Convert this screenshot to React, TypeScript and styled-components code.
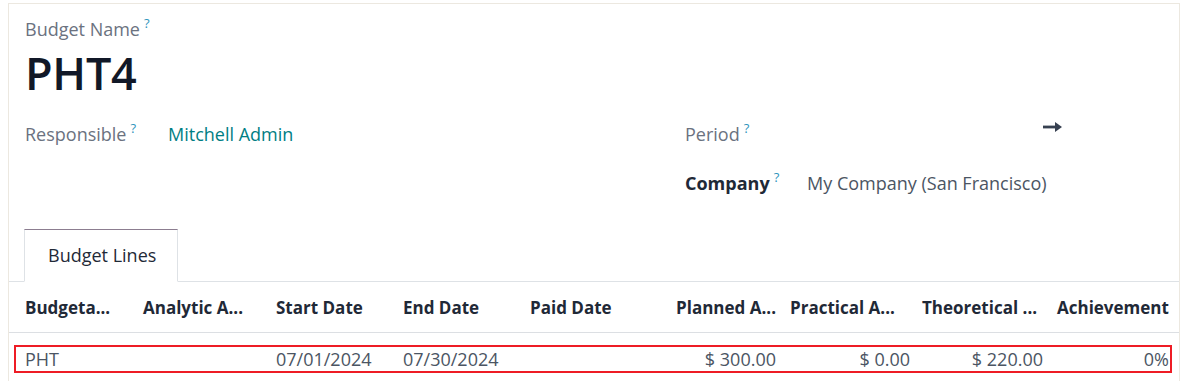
import React from "react";
import styled, { createGlobalStyle } from "styled-components";

const GlobalStyle = createGlobalStyle`
  html, body { margin: 0; padding: 0; background: #ffffff; }
  body { font-family: "Open Sans", "Noto Sans", sans-serif; color: #212529; }
`;

const Page = styled.div`
  padding: 3px 8px 0 8px;
  width: 1172px;
`;

const Card = styled.div`
  border: 1px solid #ece8e0;
  border-bottom: none;
  background: #ffffff;
  height: 378px;
  box-sizing: border-box;
`;

const TitleBlock = styled.div`
  padding: 13px 16px 0 16px;
`;

const LabelLine = styled.div`
  height: 24px;
  display: flex;
  align-items: center;
`;

const Label = styled.span<{ $bold?: boolean; $dark?: boolean }>`
  font-size: 18px;
  line-height: 24px;
  color: ${(p) => (p.$dark ? "#1f2937" : "#6b7280")};
  font-weight: ${(p) => (p.$bold ? 700 : 400)};
  white-space: nowrap;
`;

const Help = styled.sup`
  font-size: 13px;
  line-height: 13px;
  color: #2f95bd;
  margin-left: 4px;
  position: relative;
  top: -1px;
  font-weight: 400;
`;

const Title = styled.h1`
  margin: 1px 0 0 0;
  font-size: 45px;
  font-weight: 600;
  color: #111827;
  line-height: 62px;
  letter-spacing: -0.3px;
`;

const Groups = styled.div`
  display: grid;
  grid-template-columns: 660px 1fr;
  padding: 17px 16px 0 16px;
`;

const Group = styled.div`
  display: flex;
  flex-direction: column;
  gap: 23px;
`;

const FieldRow = styled.div<{ $labelWidth: number }>`
  display: grid;
  grid-template-columns: ${(p) => p.$labelWidth}px 1fr;
  align-items: center;
  height: 26px;
`;

const Value = styled.span<{ $link?: boolean }>`
  font-size: 18px;
  line-height: 24px;
  color: ${(p) => (p.$link ? "#017e84" : "#4b5563")};
  white-space: nowrap;
`;

const PeriodValue = styled.div`
  display: flex;
  justify-content: flex-end;
  align-self: start;
  padding-top: 1px;
  padding-right: 101px;
`;

const Notebook = styled.div`
  margin-top: 33px;
`;

const TabBar = styled.div`
  display: flex;
  padding-left: 15px;
  border-bottom: 1px solid #dee2e6;
  height: 52px;
  align-items: flex-end;
`;

const Tab = styled.div`
  height: 53px;
  box-sizing: border-box;
  padding: 0 21px 2px 23px;
  border: 1px solid #dee2e6;
  border-top-color: #8c7d90;
  border-bottom-color: #ffffff;
  margin-bottom: -1px;
  background: #ffffff;
  display: flex;
  align-items: center;
  font-size: 18px;
  color: #1f2937;
`;

const Table = styled.div`
  position: relative;
`;

const COLS = "118px 133px 127px 127px 128px 134px 134px 133px 126px";

const HeaderRow = styled.div`
  display: grid;
  grid-template-columns: ${COLS};
  padding-left: 8px;
  height: 50px;
  align-items: center;
  border-bottom: 1px solid #dcdfe3;
`;

const HeadCell = styled.div<{ $right?: boolean; $pl?: number }>`
  padding: 0 8px 0 ${(p) => (p.$pl ?? 8)}px;
  font-size: 17px;
  font-weight: 700;
  color: #1f2937;
  white-space: nowrap;
  overflow: hidden;
  text-align: ${(p) => (p.$right ? "right" : "left")};
`;

const DataRow = styled.div`
  position: relative;
  display: grid;
  grid-template-columns: ${COLS};
  padding-left: 8px;
  margin-top: 12px;
  height: 28px;
  align-items: center;
`;

const Cell = styled.div<{ $right?: boolean }>`
  padding: 0 8px;
  font-size: 18px;
  color: #4b5563;
  white-space: nowrap;
  text-align: ${(p) => (p.$right ? "right" : "left")};
`;

const Highlight = styled.div`
  position: absolute;
  left: 5px;
  right: 7px;
  top: 0;
  bottom: 0;
  border: 2px solid #ee1c25;
  pointer-events: none;
`;

const Arrow = () => (
  <svg width="19" height="10" viewBox="0 0 19 10">
    <rect x="0" y="3.6" width="13" height="2.8" fill="#374151" />
    <path d="M12 0 L19 5 L12 10 Z" fill="#374151" />
  </svg>
);

const headers: { t: string; right?: boolean; pl?: number }[] = [
  { t: "Budgeta..." },
  { t: "Analytic A..." },
  { t: "Start Date" },
  { t: "End Date" },
  { t: "Paid Date" },
  { t: "Planned A...", right: true },
  { t: "Practical A...", pl: 6 },
  { t: "Theoretical ...", pl: 4 },
  { t: "Achievement", pl: 6 },
];

const row: { t: string; right?: boolean }[] = [
  { t: "PHT" },
  { t: "" },
  { t: "07/01/2024" },
  { t: "07/30/2024" },
  { t: "" },
  { t: "$ 300.00", right: true },
  { t: "$ 0.00", right: true },
  { t: "$ 220.00", right: true },
  { t: "0%", right: true },
];

export default function App() {
  return (
    <>
      <GlobalStyle />
      <Page>
        <Card>
          <TitleBlock>
            <LabelLine>
              <Label>
                Budget Name<Help>?</Help>
              </Label>
            </LabelLine>
            <Title>PHT4</Title>
          </TitleBlock>
          <Groups>
            <Group>
              <FieldRow $labelWidth={143}>
                <Label>
                  Responsible<Help>?</Help>
                </Label>
                <Value $link>Mitchell Admin</Value>
              </FieldRow>
            </Group>
            <Group>
              <FieldRow $labelWidth={122}>
                <Label>
                  Period<Help>?</Help>
                </Label>
                <PeriodValue>
                  <Arrow />
                </PeriodValue>
              </FieldRow>
              <FieldRow $labelWidth={122}>
                <Label $bold $dark>
                  Company<Help>?</Help>
                </Label>
                <Value>My Company (San Francisco)</Value>
              </FieldRow>
            </Group>
          </Groups>
          <Notebook>
            <TabBar>
              <Tab>Budget Lines</Tab>
            </TabBar>
            <Table>
              <HeaderRow>
                {headers.map((h, i) => (
                  <HeadCell key={i} $right={h.right} $pl={h.pl}>
                    {h.t}
                  </HeadCell>
                ))}
              </HeaderRow>
              <DataRow>
                {row.map((c, i) => (
                  <Cell key={i} $right={c.right}>
                    {c.t}
                  </Cell>
                ))}
                <Highlight />
              </DataRow>
            </Table>
          </Notebook>
        </Card>
      </Page>
    </>
  );
}
